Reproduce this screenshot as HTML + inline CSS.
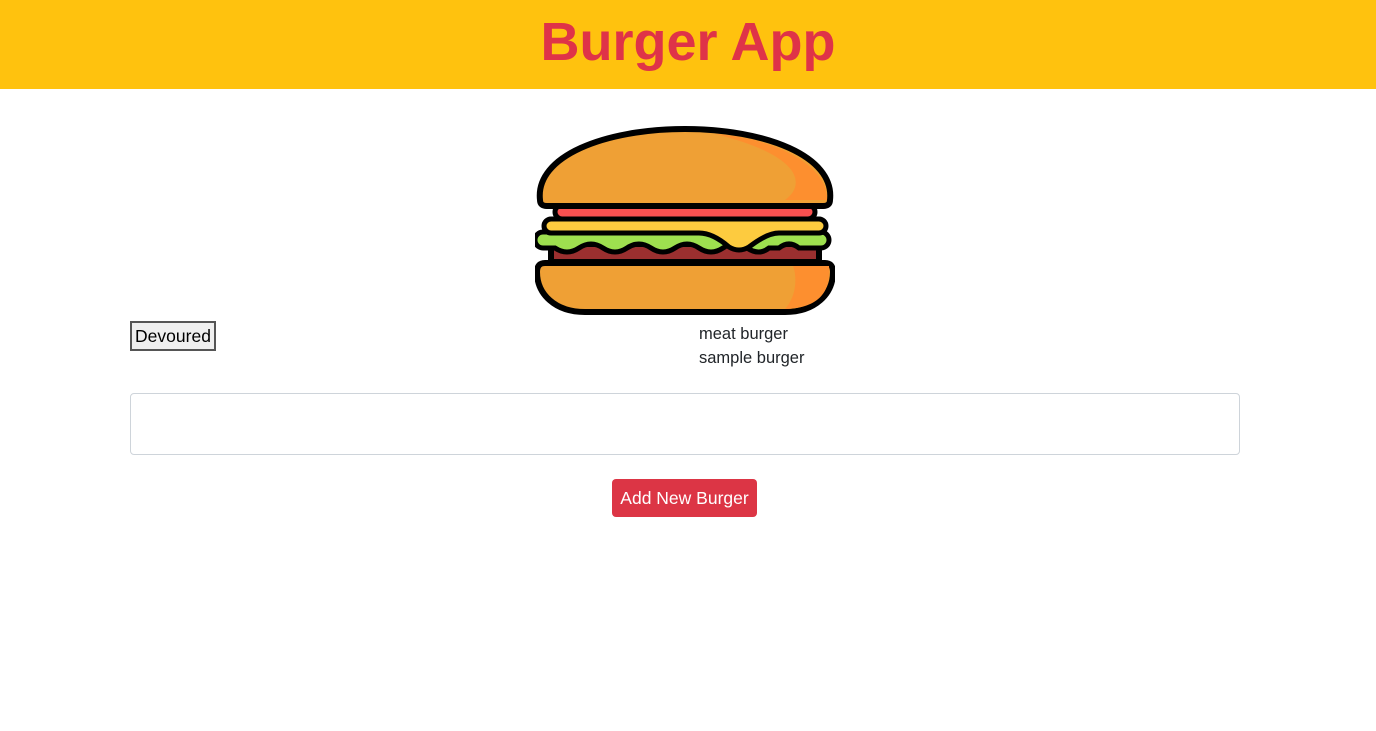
<!DOCTYPE html>
<html><head><meta charset="utf-8"><style>
body{margin:0;width:1376px;height:731px;background:#fff;font-family:"Liberation Sans",Arial,sans-serif;position:relative;overflow:hidden}
.hdr{position:absolute;left:0;top:0;width:1376px;height:89px;background:#FFC20E}
.hdr h1{margin:0;text-align:center;color:#DF3348;font-size:54px;font-weight:bold;line-height:84px;letter-spacing:0}
.btn{position:absolute;left:130px;top:321px;width:86px;height:30px;box-sizing:border-box;border:2px solid #555;background:#efefef;font-size:17.5px;text-align:center;line-height:27px;color:#000}
.names{position:absolute;left:699px;top:322px;font-size:16.5px;line-height:24px;color:#212529}
.ta{position:absolute;left:130px;top:393px;width:1110px;height:62px;box-sizing:border-box;border:1px solid #ced4da;border-radius:4px}
.add{position:absolute;left:612px;top:479px;width:145px;height:38px;background:#DC3545;color:#fff;border-radius:4px;font-size:17.5px;text-align:center;line-height:38px}
</style></head><body>
<div class="hdr"><h1>Burger App</h1></div>
<svg style="position:absolute;left:535px;top:126px" width="300" height="192" viewBox="0 0 300 192">
<rect x="16" y="118" width="268" height="18" fill="#9B2F2F" stroke="#000" stroke-width="6"/>
<path d="M14 106 h272 a8 8 0 0 1 0 16 h-22 q-10 -8 -20 0 h-10 q-10 8 -22 0 q-12 -8 -24 0 q-12 8 -24 0 q-12 -8 -24 0 q-12 8 -24 0 q-12 -8 -24 0 q-12 8 -24 0 q-12 -8 -24 0 q-12 8 -24 0 h-12 a8 8 0 0 1 0 -16z" fill="#9EE04F" stroke="#000" stroke-width="5"/>
<path d="M16 93 h268 a7 7 0 0 1 0 14 h-40 q-12 0 -30 14 q-10 6 -20 0 q-16 -14 -30 -14 h-148 a7 7 0 0 1 0 -14z" fill="#FDCB3F" stroke="#000" stroke-width="5"/>
<rect x="20" y="79" width="260" height="14" rx="7" fill="#F95050" stroke="#000" stroke-width="5"/>
<path d="M5 74 C0 30 70 3 150 3 C230 3 300 30 295 74 Q295 80 288 80 H12 Q5 80 5 74Z" fill="#EFA035" stroke="#000" stroke-width="6"/>
<path d="M180 8 C240 12 294 40 292 74 H250 C270 60 270 30 180 8Z" fill="#FD8F2F"/>
<path d="M10 137 H290 Q298 137 298 146 C298 168 280 186 250 186 H50 C20 186 2 168 2 146 Q2 137 10 137Z" fill="#EFA035" stroke="#000" stroke-width="6"/>
<path d="M258 140 H294 C296 165 285 182 250 183 C262 170 262 150 258 140Z" fill="#FD8F2F"/>
</svg>
<div class="btn">Devoured</div>
<div class="names">meat burger<br>sample burger</div>
<div class="ta"></div>
<div class="add">Add New Burger</div>
</body></html>
